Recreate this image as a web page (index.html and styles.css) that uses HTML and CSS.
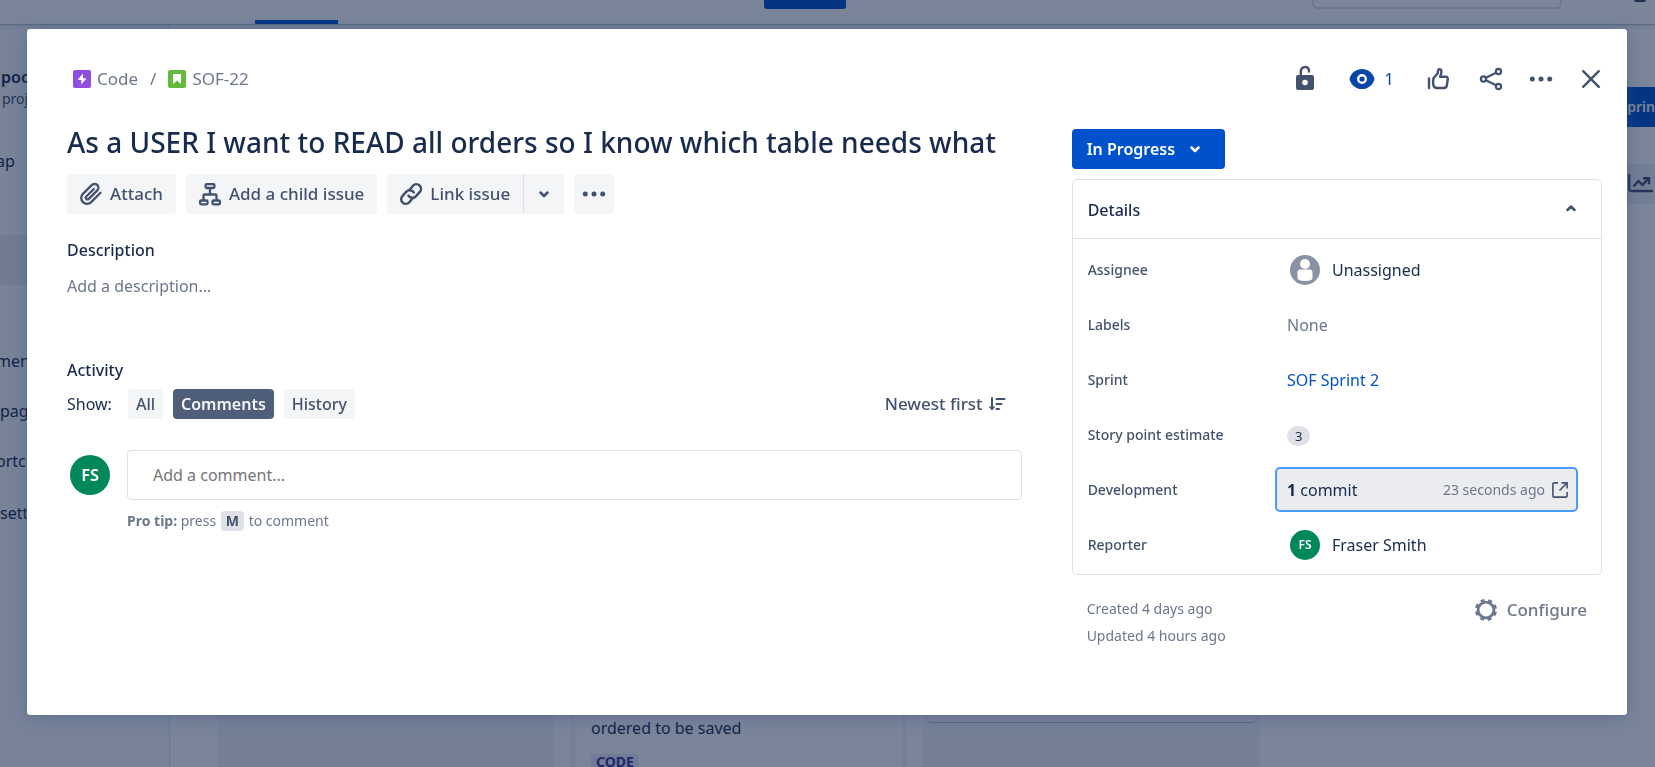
FILE: index.html
```html
<!DOCTYPE html>
<html lang="en">
<head>
<meta charset="utf-8">
<meta name="viewport" content="width=device-width, initial-scale=1">
<title>SOF-22</title>
<link rel="stylesheet" href="styles.css">
</head>
<body>
<div class="page">
  <header class="topbar">
    <span class="topbar-tab"></span>
    <button class="topbar-create" type="button" aria-label="Create"></button>
    <input class="topbar-search" type="search" aria-label="Search">
    <span class="topbar-help"></span>
  </header>
  <div class="workspace">
    <nav class="sidebar" aria-label="Project">
      <strong class="project-name">poc</strong>
      <span class="project-type">proj</span>
      <a class="nav-item nav-first nav-cut" href="#">ap</a>
      <a class="nav-item nav-selected" href="#" aria-label="Board"></a>
      <a class="nav-item nav-spaced nav-cut" href="#">men</a>
      <a class="nav-item" href="#">pag</a>
      <a class="nav-item nav-cut" href="#">ortcu</a>
      <a class="nav-item nav-last" href="#">sett</a>
    </nav>
    <div class="board">
      <div class="board-actions">
        <button class="sprint-button" type="button">sprin</button>
        <button class="insights-button" type="button" aria-label="Insights">
          <svg width="30" height="30" viewBox="0 0 30 30" fill="none" stroke="currentColor" stroke-width="2.4"><path d="M4.200 6v13.500q0 2.500 2.500 2.500H27" stroke-linecap="round"/><path d="M8.500 17.500l5-5.500 4 4 5.500-6"/><path d="M18 9.200h6v6"/></svg>
        </button>
      </div>
      <div class="columns">
        <div class="column"></div>
        <div class="column">
          <article class="card card-tall">
            <p class="card-title">ordered to be saved</p>
            <span class="card-epic">CODE</span>
          </article>
        </div>
        <div class="column"><article class="card"></article></div>
      </div>
    </div>
  </div>
</div>

<div class="blanket">
<main class="modal" role="dialog" aria-modal="true" aria-labelledby="issue-title">
  <div class="modal-head">
    <nav class="crumbs" aria-label="Breadcrumbs">
      <a class="crumb" href="#"><svg width="18" height="18" viewBox="0 0 18 18"><rect width="18" height="18" rx="2" fill="#904EE2"/><path d="M10 3.500L5 9.300q-.4.700.4.700H8.300v4.500L13 8.900q.4-.7-.4-.7H10z" fill="#fff"/></svg>Code</a>
      <span class="crumb-slash">/</span>
      <a class="crumb" href="#"><svg width="18" height="18" viewBox="0 0 18 18"><rect width="18" height="18" rx="2" fill="#63BA3C"/><path d="M5 4h8v10L9 10.500 5 14z" fill="#fff"/></svg>SOF-22</a>
    </nav>
    <div class="tools">
      <button class="tool" type="button" aria-label="Permissions"><svg width="30" height="30" viewBox="0 0 30 30"><path d="M10.800 12V7.200a4.200 4.200 0 0 1 8.200-1.200v1.500" fill="none" stroke="currentColor" stroke-width="2.400" stroke-linecap="round"/><path fill="currentColor" fill-rule="evenodd" d="M8 11h14a2 2 0 0 1 2 2v11a2 2 0 0 1-2 2H8a2 2 0 0 1-2-2V13a2 2 0 0 1 2-2zm7 4.700a2.800 2.800 0 1 0 0 5.600 2.800 2.800 0 0 0 0-5.600z"/></svg></button>
      <button class="tool tool-watch" type="button" aria-label="Watchers: 1"><svg width="30" height="30" viewBox="0 0 30 30"><path fill="currentColor" d="M15 5c6 0 10.500 3.700 12.200 8.800q.5 1.200 0 2.400C25.500 21.300 21 25 15 25S4.500 21.300 2.800 16.200q-.5-1.200 0-2.400C4.500 8.700 9 5 15 5z"/><circle cx="15" cy="15" r="3.800" fill="none" stroke="#fff" stroke-width="2.400"/></svg><span>1</span></button>
      <button class="tool" type="button" aria-label="Like"><svg width="30" height="30" viewBox="0 0 30 30" fill="none" stroke="currentColor" stroke-width="2.400" stroke-linecap="round" stroke-linejoin="round"><path d="M6 14.500v9.500"/><path d="M10 18l.6-4 4-4.500.5-3q.3-1.500 1.500-1.300 1.800.2 1.800 2.500 0 2.300-1.400 5h5.500q2.500 0 2.300 2.300l-1 6.500q-.4 2.500-2.800 2.500h-7q-3.200 0-3.600-3z"/></svg></button>
      <button class="tool" type="button" aria-label="Share"><svg width="30" height="30" viewBox="0 0 30 30" fill="none" stroke="currentColor" stroke-width="2.200"><circle cx="7.500" cy="15" r="2.600"/><circle cx="22.500" cy="7.500" r="2.600"/><circle cx="22.500" cy="22.500" r="2.600"/><path d="M9.900 13.800l10.200-5.100M9.900 16.200l10.200 5.100"/></svg></button>
      <button class="tool tool-more" type="button" aria-label="Actions"><svg width="30" height="30" viewBox="0 0 30 30" fill="currentColor"><circle cx="6.300" cy="15" r="2.500"/><circle cx="15" cy="15" r="2.500"/><circle cx="23.700" cy="15" r="2.500"/></svg></button>
      <button class="tool" type="button" aria-label="Close"><svg width="30" height="30" viewBox="0 0 30 30" fill="none" stroke="currentColor" stroke-width="2.400" stroke-linecap="round"><path d="M7.200 7.200l15.600 15.600M22.800 7.200L7.200 22.800"/></svg></button>
    </div>
  </div>

  <div class="modal-body">
    <section class="issue">
      <h1 class="issue-title" id="issue-title">As a USER I want to READ all orders so I know which table needs what</h1>
      <div class="actions">
        <button class="action" type="button"><svg width="30" height="30" viewBox="0 0 30 30" fill="none" stroke="currentColor" stroke-width="2.300" stroke-linecap="round"><path d="M24.500 13.800l-9.300 9.300a5.800 5.800 0 0 1-8.300-8.200l8.800-8.800a3.800 3.800 0 0 1 5.600 5.300l-8.500 8.500a1.700 1.700 0 0 1-2.500-2.400l7.500-7.500"/></svg>Attach</button>
        <button class="action" type="button"><svg width="30" height="30" viewBox="0 0 30 30" fill="none" stroke="currentColor" stroke-width="2.300"><rect x="10.600" y="5.200" width="8.800" height="3.800" rx="1"/><rect x="5.100" y="21.500" width="7.400" height="3.800" rx="1"/><rect x="17.500" y="21.500" width="7.400" height="3.800" rx="1"/><path d="M15 9v6.500M8.500 21v-4.300q0-1.200 1.200-1.200h10.600q1.200 0 1.200 1.200V21"/></svg>Add a child issue</button>
        <div class="split">
          <button class="action" type="button"><svg width="30" height="30" viewBox="0 0 30 30" fill="none" stroke="currentColor" stroke-width="2.500" stroke-linecap="round"><path d="M16.500 19.500l-3.300 3.800a4.600 4.600 0 0 1-6.800-6.200l4-4.400a4.600 4.600 0 0 1 6.600-.2l.8.900"/><path d="M13.800 10.500l3.200-3.800a4.600 4.600 0 0 1 6.800 6.200l-4 4.400a4.600 4.600 0 0 1-6.600.2l-.8-.9"/></svg>Link issue</button>
          <button class="action action-square" type="button" aria-label="More link options"><svg width="30" height="30" viewBox="0 0 30 30" fill="none" stroke="currentColor" stroke-width="2.500" stroke-linecap="round" stroke-linejoin="round"><path d="M11.500 13.500l3.500 3.500 3.500-3.500"/></svg></button>
        </div>
        <button class="action action-square" type="button" aria-label="More actions"><svg width="30" height="30" viewBox="0 0 30 30" fill="currentColor"><circle cx="6.300" cy="15" r="2.500"/><circle cx="15" cy="15" r="2.500"/><circle cx="23.700" cy="15" r="2.500"/></svg></button>
      </div>

      <h2 class="heading">Description</h2>
      <p class="description">Add a description...</p>

      <h2 class="heading">Activity</h2>
      <div class="filters">
        <span class="filters-label">Show:</span>
        <button class="filter" type="button">All</button>
        <button class="filter filter-on" type="button" aria-pressed="true">Comments</button>
        <button class="filter" type="button">History</button>
        <button class="sort" type="button">Newest first<svg width="20" height="20" viewBox="0 0 20 20" fill="none" stroke="currentColor" stroke-width="2" stroke-linecap="round"><path d="M5 4v10M9.500 5h8M9.500 10h5M9.500 15h2.500"/><path d="M5 16.500l-3.300-4h6.600z" fill="currentColor" stroke="none"/></svg></button>
      </div>

      <div class="comment">
        <span class="avatar avatar-large">FS</span>
        <div class="comment-entry">
          <input class="comment-input" type="text" placeholder="Add a comment..." aria-label="Add a comment">
          <p class="tip"><strong>Pro tip:</strong> press <kbd class="key">M</kbd> to comment</p>
        </div>
      </div>
    </section>

    <aside class="side">
      <button class="status" type="button">In Progress<svg width="30" height="30" viewBox="0 0 30 30" fill="none" stroke="currentColor" stroke-width="2.500" stroke-linecap="round" stroke-linejoin="round"><path d="M11.500 13.500l3.500 3.500 3.500-3.500"/></svg></button>
      <div class="panel">
        <button class="panel-head" type="button" aria-expanded="true">Details<svg width="30" height="30" viewBox="0 0 30 30" fill="none" stroke="#42526e" stroke-width="2.500" stroke-linecap="round" stroke-linejoin="round"><path d="M11.500 15l3.500-3.500 3.500 3.500"/></svg></button>
        <dl class="fields">
          <div class="field"><dt>Assignee</dt><dd class="person"><svg class="nobody" width="30" height="30" viewBox="0 0 30 30"><circle cx="15" cy="15" r="15" fill="#8993A4"/><circle cx="15" cy="9" r="5" fill="#fff"/><path d="M7.500 17.500q0-3 3-3h9q3 0 3 3v5.500q0 3-7.500 3t-7.500-3z" fill="#fff"/></svg>Unassigned</dd></div>
          <div class="field"><dt>Labels</dt><dd class="muted">None</dd></div>
          <div class="field"><dt>Sprint</dt><dd><a class="link" href="#">SOF Sprint 2</a></dd></div>
          <div class="field"><dt>Story point estimate</dt><dd><span class="points">3</span></dd></div>
          <div class="field"><dt>Development</dt><dd class="dev-cell"><a class="dev" href="#"><span><b>1</b> commit</span><span class="dev-time">23 seconds ago</span><svg width="20" height="20" viewBox="0 0 20 20" fill="none" stroke="#42526e" stroke-width="1.600"><path d="M8 2.900H4Q2.900 2.900 2.900 4v12q0 1.100 1.100 1.100h12q1.100 0 1.100-1.100v-4"/><path d="M11.500 2.900h5.600v5.600M17 3l-7.500 7.500"/></svg></a></dd></div>
          <div class="field"><dt>Reporter</dt><dd class="person"><span class="avatar">FS</span>Fraser Smith</dd></div>
        </dl>
      </div>
      <div class="side-foot">
        <div class="dates"><p>Created 4 days ago</p><p>Updated 4 hours ago</p></div>
        <button class="configure" type="button"><svg width="30" height="30" viewBox="0 0 30 30" fill="none" stroke="currentColor"><circle cx="15" cy="15" r="7.900" stroke-width="2.800"/><circle cx="15" cy="15" r="9.800" stroke-width="2.600" stroke-dasharray="4 3.697" stroke-dashoffset="-1.900"/></svg>Configure</button>
      </div>
    </aside>
  </div>
</main>
</div>
</body>
</html>
```

FILE: styles.css
```css
* { box-sizing: border-box; }

body {
  margin: 0;
  background: #fff;
  color: #172b4d;
  font: 16px/24px "Noto Sans", "Open Sans", sans-serif;
}

h1, h2, p, dl, dd { margin: 0; }
a { color: inherit; text-decoration: none; }
svg { flex: none; display: block; }

button {
  border: 0;
  padding: 0;
  background: none;
  color: inherit;
  font: inherit;
  cursor: pointer;
}

/* Project page behind the dialog */
.page { height: 100vh; overflow: hidden; display: flex; flex-direction: column; }

.topbar {
  display: flex;
  align-items: flex-start;
  height: 24px;
  padding-left: 255px;
  box-shadow: 0 1px 1px rgba(9, 30, 66, .2), 0 2px 4px rgba(9, 30, 66, .12);
  position: relative;
}
.topbar-tab { width: 83px; height: 4px; margin-right: 426px; align-self: flex-end; background: #0052cc; }
.topbar-create { width: 82px; height: 9px; background: #0052cc; border-radius: 0 0 3px 3px; }
.topbar-search {
  width: 250px;
  height: 9px;
  margin-left: auto;
  padding: 0;
  border: 2px solid #dfe1e6;
  border-top: 0;
  border-radius: 0 0 6px 6px;
  background: #fff;
}
.topbar-help { width: 12px; height: 2px; margin: 0 9px 0 72px; background: #344563; border-radius: 0 0 6px 6px; }

.workspace { flex: 1; display: flex; min-height: 0; }
.sidebar {
  width: 170px;
  flex: none;
  display: flex;
  flex-direction: column;
  padding-top: 41px;
  background: #fafbfc;
  border-right: 1px solid #dfe1e6;
}
.project-name { padding-left: 1px; font-weight: 600; }
.project-type { padding-left: 2px; font-size: 14px; line-height: 20px; color: #42526e; }
.nav-item { height: 50px; line-height: 50px; }
.nav-cut { text-indent: -4px; }
.nav-first { margin: 27px 0 49px; }
.nav-selected { background: #ebecf0; }
.nav-spaced { margin-top: 51px; }
.nav-last { margin-top: 2px; }

.board { flex: 1; display: flex; flex-direction: column; padding: 63px 0 0 47px; }
.board-actions { display: flex; flex-direction: column; align-items: flex-end; gap: 37px; }
.sprint-button { height: 40px; padding-left: 98px; background: #0052cc; color: #fff; font-size: 14px; font-weight: 600; }
.insights-button { width: 50px; height: 40px; padding-left: 20px; background: #f0f1f4; color: #42526e; }
.columns { flex: 1; display: flex; gap: 16px; margin-top: 36px; }
.column { width: 337px; padding: 0 5px; background: #f4f5f7; }
.card { height: 482px; background: #fff; border-radius: 3px; box-shadow: 0 1px 1px rgba(9, 30, 66, .25); }
.card-tall { height: 600px; padding: 476px 16px 0; }
.card-epic {
  display: inline-block;
  margin-top: 14px;
  padding: 0 5px;
  border-radius: 3px;
  background: #eae6ff;
  color: #403294;
  font-size: 14px;
  line-height: 16px;
  font-weight: 700;
}

/* Dialog */
.blanket {
  position: fixed;
  inset: 0;
  padding: 29px 28px 52px 27px;
  background: rgba(9, 30, 66, .54);
}
.modal {
  height: 100%;
  padding: 25px 25px 0 40px;
  background: #fff;
  border-radius: 3px;
  box-shadow: 0 0 1px rgba(9, 30, 66, .31), 0 2px 18px rgba(60, 78, 130, .4);
}
.modal-head { display: flex; align-items: center; justify-content: space-between; height: 50px; color: #42526e; }
.crumbs, .crumb, .tools, .tool { display: flex; align-items: center; }
.crumbs { gap: 12px; padding-left: 6px; color: #6b778c; font-size: 17px; }
.crumb { gap: 6px; }
.tools { gap: 23px; margin-right: -4px; }
.tool-watch { gap: 7px; margin: 0 6px 0 4px; color: #0747a6; font-size: 17px; }
.tool-more { margin: 0 -3px; }

.modal-body { display: grid; grid-template-columns: minmax(0, 9fr) minmax(0, 5fr); gap: 50px; }

.issue-title { margin-top: 20px; font-size: 28px; line-height: 36px; font-weight: 500; }
.actions { display: flex; gap: 10px; margin-top: 14px; color: #42526e; font-size: 17px; font-weight: 500; }
.action {
  display: flex;
  align-items: center;
  gap: 4px;
  height: 40px;
  padding: 0 13px 0 9px;
  background: #f4f5f7;
  border-radius: 4px;
}
.action-square { padding: 0 5px; }
.split { display: flex; gap: 1px; border-radius: 4px; overflow: hidden; background: #dfe1e6; }
.split .action { border-radius: 0; }

.heading { margin-top: 24px; font-size: 16px; line-height: 24px; font-weight: 500; }
.description { margin: 12px 0 60px; color: #6b778c; }

.filters { display: flex; align-items: center; gap: 10px; height: 30px; margin-top: 7px; }
.filters-label { margin-right: 6px; }
.filter { height: 30px; padding: 0 8px; border-radius: 4px; background: #f4f5f7; color: #42526e; font-weight: 500; }
.filter-on { background: #505f79; color: #f4f5f7; font-weight: 600; }
.sort { display: flex; align-items: center; gap: 4px; margin: 0 15px 0 auto; color: #42526e; font-weight: 500; font-size: 17px; }

.comment { display: flex; gap: 17px; margin-top: 31px; padding-left: 3px; }
.avatar {
  display: flex;
  align-items: center;
  justify-content: center;
  flex: none;
  width: 30px;
  height: 30px;
  border-radius: 50%;
  background: #00875a;
  color: #fff;
  font-size: 12px;
  font-weight: 600;
}
.avatar-large { width: 40px; height: 40px; margin-top: 5px; font-size: 16px; }
.comment-entry { flex: 1; }
.comment-input {
  display: block;
  width: 100%;
  height: 50px;
  padding: 0 25px;
  border: 1px solid #dfe1e6;
  border-radius: 4px;
  font: inherit;
}
.comment-input::placeholder { color: #757575; opacity: 1; }
.tip { margin-top: 9px; color: #6b778c; font-size: 14px; }
.key {
  display: inline-block;
  margin: 0 1px;
  padding: 0 5px;
  border-radius: 4px;
  background: #dfe1e6;
  color: #42526e;
  font: 700 14px/20px "Noto Sans", sans-serif;
}

.status {
  display: flex;
  align-items: center;
  gap: 5px;
  height: 40px;
  padding: 0 15px;
  border-radius: 4px;
  background: #0052cc;
  color: #fff;
  font-weight: 600;
}
.side { padding-top: 25px; }
.panel { margin-top: 10px; border: 1px solid #dfe1e6; border-radius: 5px; }
.panel-head {
  display: flex;
  align-items: center;
  justify-content: space-between;
  width: 100%;
  height: 59px;
  padding: 2px 15px 0;
  border-bottom: 1px solid #dfe1e6;
  font-weight: 500;
}
.fields { padding: 3px 15px 2px; }
.field { display: grid; grid-template-columns: 2fr 3fr; align-items: center; height: 55px; }
.field dt { color: #42526e; font-size: 14px; font-weight: 500; }
.person { display: flex; align-items: center; gap: 12px; padding-left: 3px; }
.muted { color: #6b778c; }
.link { color: #0052cc; }
.points {
  display: inline-block;
  padding: 0 8px;
  border-radius: 10px;
  background: #dfe1e6;
  font-size: 13px;
  line-height: 20px;
}
.dev-cell { margin: 0 8px 0 -12px; }
.dev {
  display: flex;
  align-items: center;
  gap: 5px;
  height: 45px;
  padding: 0 6px 0 10px;
  border: 2px solid #4c9aff;
  border-radius: 5px;
  background: #ebecf0;
}
.dev-time { margin-left: auto; color: #6b778c; font-size: 14px; }

.side-foot { display: flex; justify-content: space-between; align-items: flex-start; padding: 20px 15px 0; color: #6b778c; }
.dates { font-size: 14px; line-height: 27px; }
.configure { display: flex; align-items: center; gap: 6px; font-size: 17px; font-weight: 500; }
```
